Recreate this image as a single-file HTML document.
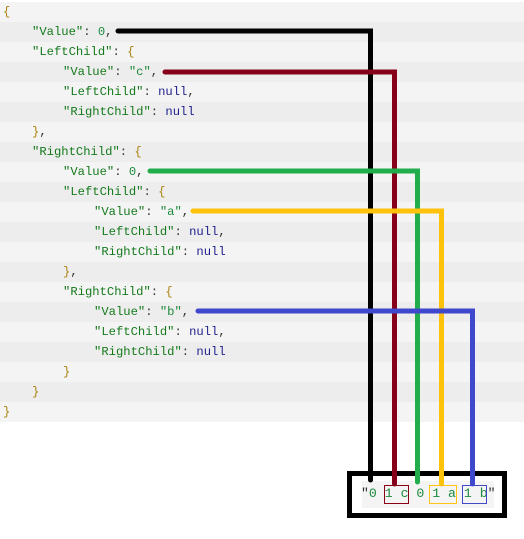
<!DOCTYPE html>
<html><head><meta charset="utf-8"><style>
body{margin:0;width:524px;height:539px;background:#fff;position:relative;overflow:hidden;font-family:"Liberation Mono",monospace;font-size:12.2px}
.r{position:absolute;left:0;width:524px;height:20px;line-height:20px;white-space:pre}
.o{background:#f4f4f4}.e{background:#ededed}
.b{color:#a9820f}.k{color:#157a1c}.n{color:#1e1e8c}.v{color:#1d8a3c}.p{color:#333}
.l{position:absolute}
</style></head><body>
<div class="r o" style="top:2px"><span class="b" style="margin-left:3px">{</span></div>
<div class="r e" style="top:22px"><span style="margin-left:32px" class="k">"Value"</span><span class="p">: </span><span class="v">0</span><span class="p">,</span></div>
<div class="r o" style="top:42px"><span style="margin-left:32px" class="k">"LeftChild"</span><span class="p">: </span><span class="b">{</span></div>
<div class="r e" style="top:62px"><span style="margin-left:63px" class="k">"Value"</span><span class="p">: </span><span class="v">"c"</span><span class="p">,</span></div>
<div class="r o" style="top:82px"><span style="margin-left:63px" class="k">"LeftChild"</span><span class="p">: </span><span class="n">null</span><span class="p">,</span></div>
<div class="r e" style="top:102px"><span style="margin-left:63px" class="k">"RightChild"</span><span class="p">: </span><span class="n">null</span></div>
<div class="r o" style="top:122px"><span style="margin-left:32px" class="b">}</span><span class="p">,</span></div>
<div class="r e" style="top:142px"><span style="margin-left:32px" class="k">"RightChild"</span><span class="p">: </span><span class="b">{</span></div>
<div class="r o" style="top:162px"><span style="margin-left:63px" class="k">"Value"</span><span class="p">: </span><span class="v">0</span><span class="p">,</span></div>
<div class="r e" style="top:182px"><span style="margin-left:63px" class="k">"LeftChild"</span><span class="p">: </span><span class="b">{</span></div>
<div class="r o" style="top:202px"><span style="margin-left:94px" class="k">"Value"</span><span class="p">: </span><span class="v">"a"</span><span class="p">,</span></div>
<div class="r e" style="top:222px"><span style="margin-left:94px" class="k">"LeftChild"</span><span class="p">: </span><span class="n">null</span><span class="p">,</span></div>
<div class="r o" style="top:242px"><span style="margin-left:94px" class="k">"RightChild"</span><span class="p">: </span><span class="n">null</span></div>
<div class="r e" style="top:262px"><span style="margin-left:63px" class="b">}</span><span class="p">,</span></div>
<div class="r o" style="top:282px"><span style="margin-left:63px" class="k">"RightChild"</span><span class="p">: </span><span class="b">{</span></div>
<div class="r e" style="top:302px"><span style="margin-left:94px" class="k">"Value"</span><span class="p">: </span><span class="v">"b"</span><span class="p">,</span></div>
<div class="r o" style="top:322px"><span style="margin-left:94px" class="k">"LeftChild"</span><span class="p">: </span><span class="n">null</span><span class="p">,</span></div>
<div class="r e" style="top:342px"><span style="margin-left:94px" class="k">"RightChild"</span><span class="p">: </span><span class="n">null</span></div>
<div class="r o" style="top:362px"><span style="margin-left:63px" class="b">}</span></div>
<div class="r e" style="top:382px"><span style="margin-left:32px" class="b">}</span></div>
<div class="r o" style="top:402px"><span style="margin-left:3px" class="b">}</span></div>

<div class="l" style="left:347px;top:471px;width:150px;height:37px;border:5px solid #000"></div>
<div class="l" style="left:362px;top:481px;width:132px;height:27px;background:#f4f4f4"></div>
<div class="l" style="left:361px;top:484px;height:20px;line-height:20px;white-space:pre;font-size:13.2px"><span class="p">"</span><span class="v">0 1 c 0 1 a 1 b</span><span class="p">"</span></div>
<div class="l" style="left:384px;top:485px;width:23px;height:17px;border:1px solid #8b0016"></div>
<div class="l" style="left:429px;top:485px;width:26px;height:17px;border:1px solid #ffc512"></div>
<div class="l" style="left:462px;top:485px;width:23px;height:17px;border:1px solid #4249c8"></div>

<svg class="l" style="left:0;top:0" width="524" height="539">
<g fill="none" stroke-width="5" stroke-linecap="round">
<path d="M118 31 H370.5 V480" stroke="#000"/>
<path d="M165 72 H394.5 V484" stroke="#850018"/>
<path d="M150 171 H417.5 V482" stroke="#22ad4c"/>
<path d="M193 211 H441.5 V484" stroke="#fec10c"/>
<path d="M198 311 H472.5 V484" stroke="#3f48cc"/>
</g>
</svg>
</body></html>
